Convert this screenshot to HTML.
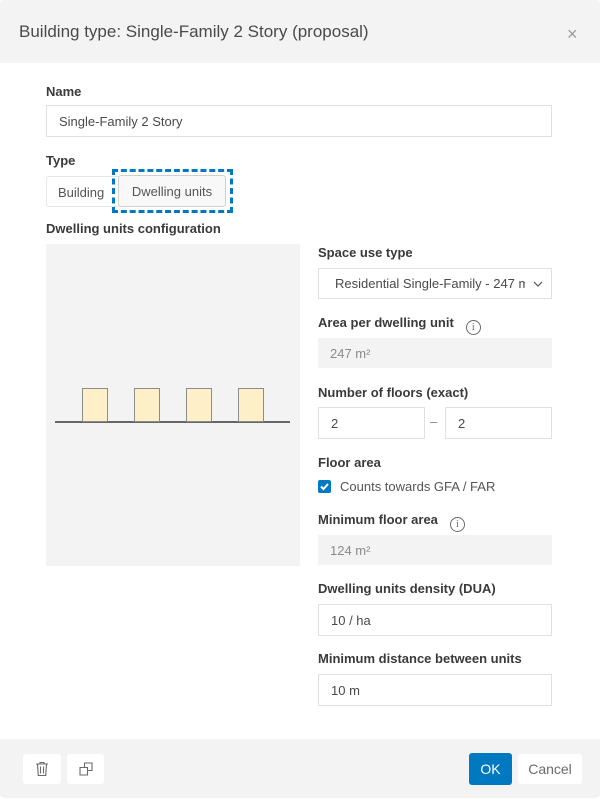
<!DOCTYPE html>
<html><head><style>
*{box-sizing:border-box;margin:0;padding:0}
body{width:600px;height:799px;background:#fff;font-family:"Liberation Sans",sans-serif;position:relative;overflow:hidden;color:#323232}
.a{position:absolute}
.hdr{left:0;top:0;width:600px;height:63px;background:#f3f3f3;border-radius:4px 4px 0 0}
.ftr{left:0;top:739px;width:600px;height:59px;background:#f3f3f3;border-radius:0 0 4px 4px}
.lbl{font-size:13px;font-weight:bold;color:#3a3a3a;left:46px}
.r{left:318px}
.in{border:1px solid #e0e0e0;background:#fff;font-size:13px;color:#4a4a4a;padding-left:12px;display:flex;align-items:center}
.dis{background:#f3f3f3;border:none;color:#8a8a8a}
.info{display:inline-block;width:15px;height:15px;border:1px solid #6a6a6a;border-radius:50%;font-size:10px;text-align:center;line-height:13px;font-weight:normal;color:#6a6a6a;margin-left:12px;font-family:"Liberation Serif",serif;vertical-align:-3px}
.btn{background:#fff;border-radius:3px;display:flex;align-items:center;justify-content:center}
.h{width:26px;height:34px;background:#fdf0c8;border:1.5px solid #8c8c8c;top:388px}
</style></head><body>
<div class="a hdr"></div>
<div class="a" style="left:19px;top:22px;font-size:17px;color:#4a4a4a">Building type: Single-Family 2 Story (proposal)</div>
<div class="a" style="left:567px;top:24px;font-size:18px;color:#9a9a9a">×</div>

<div class="a lbl" style="top:84px">Name</div>
<div class="a in" style="left:46px;top:105px;width:506px;height:32px">Single-Family 2 Story</div>

<div class="a lbl" style="top:153px">Type</div>
<div class="a" style="left:46px;top:176px;width:80px;height:31px;border:1px solid #e6e6e6;border-right:none;border-radius:3px 0 0 3px;font-size:13px;color:#555;padding:8px 0 0 11px">Building</div>
<div class="a" style="left:112px;top:169px;width:121px;height:44px;border:3px dashed #0079c1"></div>
<div class="a" style="left:118px;top:175px;width:108px;height:32px;background:#f8f8f8;border:1px solid #cfcfcf;border-radius:3px;font-size:13px;color:#555;text-align:center;padding-top:8px">Dwelling units</div>

<div class="a lbl" style="top:221px">Dwelling units configuration</div>
<div class="a" style="left:46px;top:244px;width:254px;height:322px;background:#f3f3f3"></div>
<div class="a" style="left:55px;top:421px;width:235px;height:2px;background:#666"></div>
<div class="a h" style="left:82px"></div>
<div class="a h" style="left:134px"></div>
<div class="a h" style="left:186px"></div>
<div class="a h" style="left:238px"></div>

<div class="a lbl r" style="top:245px">Space use type</div>
<div class="a in" style="left:318px;top:268px;width:234px;height:31px;padding-left:16px;white-space:nowrap;overflow:hidden">Residential Single-Family - 247 m<span style="position:absolute;right:0;top:0;width:26px;height:29px;background:#fff;display:flex;align-items:center;justify-content:center"><svg width="10" height="6"><path d="M1 1l4 4 4-4" stroke="#555" stroke-width="1.2" fill="none"/></svg></span></div>

<div class="a lbl r" style="top:315px">Area per dwelling unit<span class="info">i</span></div>
<div class="a in dis" style="left:318px;top:338px;width:234px;height:30px">247 m²</div>

<div class="a lbl r" style="top:385px">Number of floors (exact)</div>
<div class="a in" style="left:318px;top:407px;width:107px;height:32px">2</div>
<div class="a" style="left:430px;top:414px;font-size:13px;color:#888">–</div>
<div class="a in" style="left:445px;top:407px;width:107px;height:32px">2</div>

<div class="a lbl r" style="top:455px">Floor area</div>
<div class="a" style="left:318px;top:480px;width:13px;height:13px;background:#0079c1;border-radius:2px"><svg width="13" height="13"><path d="M3 6.5l2.5 2.5 4.5-5" stroke="#fff" stroke-width="2" fill="none"/></svg></div>
<div class="a" style="left:340px;top:479px;font-size:13px;color:#555">Counts towards GFA / FAR</div>

<div class="a lbl r" style="top:512px">Minimum floor area<span class="info">i</span></div>
<div class="a in dis" style="left:318px;top:535px;width:234px;height:30px">124 m²</div>

<div class="a lbl r" style="top:581px">Dwelling units density (DUA)</div>
<div class="a in" style="left:318px;top:604px;width:234px;height:32px">10 / ha</div>

<div class="a lbl r" style="top:651px">Minimum distance between units</div>
<div class="a in" style="left:318px;top:674px;width:234px;height:32px">10 m</div>

<div class="a ftr"></div>
<div class="a btn" style="left:23px;top:754px;width:38px;height:30px"><svg width="14" height="16"><path d="M1 3h12M5 3V1.5h4V3M2.5 3l.8 11.5h7.4L11.5 3M5.5 5.5v7M8.5 5.5v7" stroke="#6a6a6a" stroke-width="1.1" fill="none"/></svg></div>
<div class="a btn" style="left:67px;top:754px;width:37px;height:30px"><svg width="14" height="14"><path d="M1 5.5h7.5v7.5H1zM5.5 5.5V1H13v7.5H8.5" stroke="#6a6a6a" stroke-width="1.1" fill="none"/></svg></div>
<div class="a btn" style="left:469px;top:753px;width:43px;height:32px;background:#0079c1;color:#fff;font-size:14px">OK</div>
<div class="a btn" style="left:518px;top:754px;width:64px;height:30px;color:#6a6a6a;font-size:14px">Cancel</div>
</body></html>
